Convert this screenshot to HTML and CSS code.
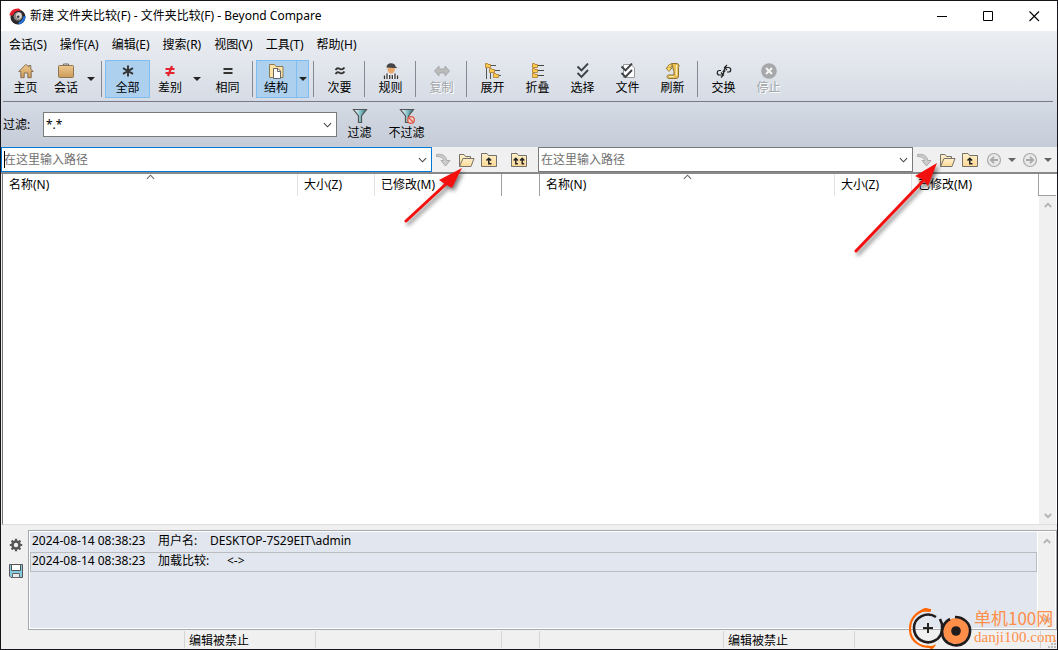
FILE: index.html
```html
<!DOCTYPE html>
<html lang="zh-CN">
<head>
<meta charset="utf-8">
<title>新建 文件夹比较(F) - Beyond Compare</title>
<link rel="stylesheet" href="styles.css">
</head>
<body>
<svg class="defs" aria-hidden="true">
  <defs>
    <linearGradient id="gold" x1="0" y1="0" x2="0" y2="1"><stop offset="0" stop-color="#eec98f"/><stop offset="1" stop-color="#cd9a59"/></linearGradient>
    <linearGradient id="paper" x1="0" y1="0" x2="0" y2="1"><stop offset="0" stop-color="#fff0cb"/><stop offset="1" stop-color="#fbd995"/></linearGradient>
    <linearGradient id="teal" x1="0" y1="0" x2="1" y2="0"><stop offset="0" stop-color="#fff"/><stop offset=".5" stop-color="#8cc5cc"/><stop offset="1" stop-color="#23777f"/></linearGradient>
    <symbol id="chev" viewBox="0 0 10 6"><path d="M1 1l4 4 4-4" fill="none" stroke="currentColor" stroke-width="1.2"/></symbol>
    <symbol id="scrollchev" viewBox="0 0 8 6"><path d="M.8 5L4 1.8 7.200 5" fill="none" stroke="#b5b5b5" stroke-width="2"/></symbol>
    <symbol id="tri" viewBox="0 0 8 4"><path d="M0 0h8L4 4z" fill="currentColor"/></symbol>
    <symbol id="go" viewBox="0 0 17 14"><path d="M1.500 1.500C7 .5 11.500 3 11.500 7.500H15L10.500 13 6 7.500H8.500C8.500 5 5.500 3.500 1.500 3.500z" fill="#ccc" stroke="#aaa"/></symbol>
    <symbol id="open" viewBox="0 0 17 14"><path d="M1.500 13.500V1.500H6L7.500 3.500H12.500V5.500" fill="url(#paper)" stroke="#75706a"/><path d="M1.500 13.500L5 5.500H16L13 13.500z" fill="url(#paper)" stroke="#75706a"/></symbol>
    <symbol id="up" viewBox="0 0 17 14"><path d="M.5 13.500V.5H6L7.500 2.500H15.500V13.500z" fill="url(#paper)" stroke="#75706a"/><path d="M7.800 5v5.700h2.700M5.500 7.500L7.800 5.200l2.300 2.300" fill="none" stroke="#222" stroke-width="1.500"/></symbol>
    <symbol id="upup" viewBox="0 0 17 14"><path d="M.5 13.500V.5H6L7.500 2.500H15.500V13.500z" fill="url(#paper)" stroke="#75706a"/><path d="M4.800 5v5.700h2M2.700 7.500l2.100-2.300 2.100 2.300M11.200 5v5.700h2M9.100 7.500l2.100-2.300 2.100 2.300" fill="none" stroke="#222" stroke-width="1.400"/></symbol>
    <symbol id="back" viewBox="0 0 16 16"><circle cx="8" cy="8" r="6.500" fill="#e8e8e8" stroke="#aaa" stroke-width="1.200"/><path d="M12 8H5M8 4.800L4.800 8 8 11.200" fill="none" stroke="#aaa" stroke-width="1.800"/></symbol>
    <symbol id="forward" viewBox="0 0 16 16"><circle cx="8" cy="8" r="6.500" fill="#e8e8e8" stroke="#aaa" stroke-width="1.200"/><path d="M4 8h7M8 4.800L11.200 8 8 11.200" fill="none" stroke="#aaa" stroke-width="1.800"/></symbol>
    <symbol id="funnel" viewBox="0 0 16 16"><path d="M1.500 1.500h13L9.500 8v6.500h-3V8z" fill="url(#teal)" stroke="#555" stroke-width="1.200"/></symbol>
    <symbol id="flag" viewBox="0 0 6 5"><path d="M.5 4.500v-4h2l.5 1h2.500v3z" fill="#ffc94d" stroke="#a9782b" stroke-width=".8"/></symbol>
  </defs>
</svg>
<div class="window">
  <header class="titlebar">
    <svg class="app-icon" viewBox="0 0 18 18" aria-hidden="true"><circle cx="9.500" cy="9.500" r="8" fill="#2b272b"/><path d="M.5 8C1 3 5 0 10.500.5L13 3C8 2.500 5 4 4 8z" fill="#e8202b"/><path d="M17.500 8.500c.3 4.500-3 8.500-7.500 9l.5-3c2.500-.5 4-2 4.500-5.500z" fill="#2472d8"/><circle cx="9.500" cy="9" r="4.600" fill="#8d8784"/><ellipse cx="10.500" cy="8" rx="3" ry="3.500" fill="#dcd7d1"/><circle cx="9.700" cy="9.300" r="1.400" fill="#443d3e"/></svg>
    <h1 class="title">新建 文件夹比较(F) - 文件夹比较(F) - Beyond Compare</h1>
    <div class="win-controls">
      <button aria-label="最小化"><svg viewBox="0 0 11 11"><path d="M0 5.500h10" stroke="#000"/></svg></button>
      <button aria-label="最大化"><svg viewBox="0 0 11 11"><path d="M.5.5h9v9H.5z" fill="none" stroke="#000"/></svg></button>
      <button aria-label="关闭"><svg viewBox="0 0 11 11"><path d="M.5.5l9.500 9.500M10 .5L.5 10" stroke="#000" stroke-width="1.100"/></svg></button>
    </div>
  </header>

  <div class="chrome">
    <nav class="menubar">
      <button>会话(S)</button><button>操作(A)</button><button>编辑(E)</button><button>搜索(R)</button><button>视图(V)</button><button>工具(T)</button><button>帮助(H)</button>
    </nav>
    <div class="toolbar" role="toolbar">
      <button class="tool"><svg viewBox="0 0 16 16"><path d="M.8 8.500L8 1.300l2.800 2.800V2.500h2v3.600l2.400 2.400h-2v6.200H9.800V10H6.200v4.700H2.800V8.500z" fill="url(#gold)" stroke="#857056"/></svg>主页</button>
      <div class="split">
        <button class="tool tool-narrow"><svg viewBox="0 0 16 16"><path d="M5.500 3V1h5v2" fill="none" stroke="#76695a"/><rect x=".5" y="2.500" width="15" height="12" rx="1" fill="url(#gold)" stroke="#8c7454"/></svg>会话</button>
        <button class="drop" aria-label="会话菜单"><svg><use href="#tri"/></svg></button>
      </div>
      <span class="sep"></span>
      <button class="tool selected"><svg viewBox="0 0 16 16"><path d="M8 2.500v11M3 5.200l10 5.600M13 5.200L3 10.800" stroke="#333" stroke-width="1.900"/></svg>全部</button>
      <div class="split">
        <button class="tool tool-main"><svg viewBox="0 0 16 16"><path d="M3.500 6h9M3.500 10h9M10 3L6 13" stroke="#e5232d" stroke-width="2.200"/></svg>差别</button>
        <button class="drop" aria-label="差别菜单"><svg><use href="#tri"/></svg></button>
      </div>
      <button class="tool"><svg viewBox="0 0 16 16"><path d="M3.500 6h9M3.500 10h9" stroke="#333" stroke-width="2"/></svg>相同</button>
      <span class="sep"></span>
      <div class="split selected">
        <button class="tool tool-main"><svg viewBox="0 0 16 16"><path d="M1.500 14.500v-13h5l1.500 2h7v11z" fill="#ffe3a4" stroke="#8d7a58"/><path d="M5.500 5.500H10l2.500 2.500v7.500h-7z" fill="#fff" stroke="#666"/><path d="M9.500 5.500v3h3" fill="none" stroke="#666"/></svg>结构</button>
        <button class="drop" aria-label="结构菜单"><svg><use href="#tri"/></svg></button>
      </div>
      <span class="sep"></span>
      <button class="tool"><svg viewBox="0 0 16 16"><path d="M3.500 7c2-3 3.500-1.500 4.500-1s2.500 1.200 4.500-1.500M3.500 11c2-3 3.500-1.500 4.500-1s2.500 1.200 4.500-1.500" fill="none" stroke="#333" stroke-width="1.900"/></svg>次要</button>
      <span class="sep"></span>
      <button class="tool"><svg viewBox="0 0 16 16"><path d="M4.500 4.500h7.500c0 4-1.500 6-4 6s-3.500-2.500-3.500-6z" fill="#eba66a"/><path d="M3.500 4.500C3.500-1 12-1 12.500 3.500l2 1.500h-4z" fill="#454545"/><path d="M.5 16c0-4 2-5 4.500-5.500L8 12.500l3-2c2.500.5 4.500 1.500 4.500 5.500z" fill="#f4f4f4"/><path d="M1.500 16v-3.500M4 16v-5.500M6.700 16v-4M9.300 16v-4M12 16v-5.500M14.500 16v-3.500" stroke="#333" stroke-width="1.300"/></svg>规则</button>
      <span class="sep"></span>
      <button class="tool" disabled><svg viewBox="0 0 16 16"><path d="M.5 8L5 3v3h6V3l4.500 5L11 13v-3H5v3z" fill="#bbb" stroke="#a7a9ac"/></svg>复制</button>
      <span class="sep"></span>
      <button class="tool"><svg viewBox="0 0 16 16"><path d="M1.500 5v11M5.500 10v6M6 2.500h5M10 7.500h5M14 12.500h2" stroke="#555" fill="none"/><use href="#flag" x="0" y="0" width="6" height="5"/><use href="#flag" x="4" y="5" width="6" height="5"/><use href="#flag" x="8" y="10" width="6" height="5"/></svg>展开</button>
      <button class="tool"><svg viewBox="0 0 16 16"><path d="M8 2.500h6M8 7.500h6M8 12.500h6" stroke="#444"/><use href="#flag" x="2" y="0" width="6" height="5"/><use href="#flag" x="2" y="5" width="6" height="5"/><use href="#flag" x="2" y="10" width="6" height="5"/></svg>折叠</button>
      <button class="tool"><svg viewBox="0 0 16 16"><path d="M2.500 3.500l4 4 6.500-7M2.500 10l4 4L13 7" fill="none" stroke="#3e4247" stroke-width="1.900"/></svg>选择</button>
      <button class="tool"><svg viewBox="0 0 16 16"><path d="M3.500 1.500H11l3.500 3.500v9.500h-11z" fill="#fff" stroke="#999"/><path d="M1.500 3.500l4 4 6.500-7M1.500 10l4 4L12 7" fill="none" stroke="#3e4247" stroke-width="1.900"/></svg>文件</button>
      <button class="tool"><svg viewBox="0 0 16 16"><path d="M6.500.5H12c2 .5 2.500 2.500 1.500 4v8.500c0 1.500-1 2.500-2.500 2.500H4c-2.500 0-2.500-3.500 0-3.500h5V8.500z" fill="#e9bd55" stroke="#8f7131"/><path d="M11.500 2v10.500" stroke="#fff0b3" stroke-width="1.300"/><path d="M7 1v2.500c-1.500 0-2 .5-2 1.500h2L4 8.500 1 5h1.500C2.500 2.500 4 1 7 1z" fill="#ffd65c" stroke="#8f7131" stroke-width=".8"/><path d="M4 13.500h5" stroke="#fff0b3"/></svg>刷新</button>
      <span class="sep"></span>
      <button class="tool"><svg viewBox="0 0 16 16"><path d="M5 7.500H3.500c-3 0-3 4.500 0 4.500H7M5 9.500L7.500 12 5 14.500M11 9h1.500c3 0 3-4.500 0-4.500H9M11 2L8.500 4.500 11 7M6.500 8.500c2 0 2-1.500 2-3M9.500 8c-2 0-2 1.500-2 3" fill="none" stroke="#222" stroke-width="1.200"/></svg>交换</button>
      <button class="tool" disabled><svg viewBox="0 0 16 16"><circle cx="8" cy="8" r="7.800" fill="#a5a7a9"/><path d="M5 5l6 6M11 5l-6 6" stroke="#f2f2f2" stroke-width="2.200"/></svg>停止</button>
    </div>
    <div class="filterbar">
      <label for="filter">过滤:</label>
      <div class="combo filter-combo"><input id="filter" value="*.*"><button aria-label="过滤列表"><svg><use href="#chev"/></svg></button></div>
      <button class="tool"><svg><use href="#funnel"/></svg>过滤</button>
      <button class="tool tool-wide"><svg viewBox="0 0 16 16"><use href="#funnel" width="16" height="16"/><circle cx="12" cy="12" r="3.300" fill="#f5d4cf" stroke="#d95b49" stroke-width="1.300"/><path d="M9.800 9.800l4.400 4.400" stroke="#d95b49" stroke-width="1.300"/></svg>不过滤</button>
    </div>
  </div>

  <div class="columns pathbar">
    <div class="path path-left">
      <div class="combo focused"><span class="cursor"></span><input aria-label="左侧路径" placeholder="在这里输入路径"><button aria-label="左侧历史"><svg><use href="#chev"/></svg></button></div>
      <button class="icon" disabled aria-label="转到"><svg><use href="#go"/></svg></button>
      <button class="icon" aria-label="浏览文件夹"><svg><use href="#open"/></svg></button>
      <button class="icon" aria-label="上一级"><svg><use href="#up"/></svg></button>
      <button class="icon both" aria-label="两侧上一级"><svg><use href="#upup"/></svg></button>
    </div>
    <div class="path path-right">
      <div class="combo"><input aria-label="右侧路径" placeholder="在这里输入路径"><button aria-label="右侧历史"><svg><use href="#chev"/></svg></button></div>
      <button class="icon" disabled aria-label="转到"><svg><use href="#go"/></svg></button>
      <button class="icon" aria-label="浏览文件夹"><svg><use href="#open"/></svg></button>
      <button class="icon" aria-label="上一级"><svg><use href="#up"/></svg></button>
      <button class="icon round" disabled aria-label="后退"><svg><use href="#back"/></svg></button>
      <button class="drop" aria-label="后退历史"><svg><use href="#tri"/></svg></button>
      <button class="icon round" disabled aria-label="前进"><svg><use href="#forward"/></svg></button>
      <button class="drop" aria-label="前进历史"><svg><use href="#tri"/></svg></button>
    </div>
  </div>

  <main class="columns files">
    <table class="list"><thead><tr><th class="name">名称(N)<svg class="sort"><use href="#chev"/></svg></th><th class="size">大小(Z)</th><th class="date">已修改(M)</th></tr></thead></table>
    <div class="gutter"></div>
    <table class="list"><thead><tr><th class="name">名称(N)<svg class="sort"><use href="#chev"/></svg></th><th class="size">大小(Z)</th><th class="date">已修改(M)</th></tr></thead></table>
    <div class="scroll-side">
      <div class="corner"></div>
      <div class="scrollbar"><button aria-label="向上滚动"><svg><use href="#scrollchev"/></svg></button><button aria-label="向下滚动"><svg class="flip"><use href="#scrollchev"/></svg></button></div>
    </div>
  </main>

  <section class="log">
    <div class="log-tools">
      <button aria-label="设置"><svg viewBox="0 0 14 14"><circle cx="7" cy="7" r="3.500" fill="none" stroke="#555" stroke-width="2.600"/><path d="M7 .8v2M7 11.200v2M.8 7h2M11.200 7h2M2.600 2.600L4 4M10 10l1.400 1.400M11.400 2.600L10 4M4 10l-1.400 1.400" stroke="#555" stroke-width="2.200"/></svg></button>
      <button aria-label="保存"><svg viewBox="0 0 14 14"><path d="M.5.5h13v13H2L.5 12z" fill="#83cbe2" stroke="#555"/><path d="M2.500.5h9v6h-9z" fill="#fff" stroke="#555"/><path d="M3.500 9.500h7v4h-7z" fill="#e6ebe9" stroke="#666"/></svg></button>
    </div>
    <div class="log-frame">
      <ul class="log-list">
        <li><span class="time">2024-08-14 08:38:23</span><span class="kind">用户名:</span><span>DESKTOP-7S29EIT\admin</span></li>
        <li class="current"><span class="time">2024-08-14 08:38:23</span><span class="kind kind-long">加载比较:</span><span>&lt;-&gt;</span></li>
      </ul>
      <div class="scrollbar"><button aria-label="日志向上滚动"><svg><use href="#scrollchev"/></svg></button><button aria-label="日志向下滚动"><svg class="flip"><use href="#scrollchev"/></svg></button></div>
    </div>
  </section>

  <footer class="columns statusbar">
    <div class="status-side"><span class="blank"></span><span class="state">编辑被禁止</span></div>
    <div class="gutter"></div>
    <div class="status-side"><span class="blank"></span><span class="state">编辑被禁止</span></div>
    <svg class="grip" viewBox="0 0 9 9"><path d="M6 0h2v2H6zM3 3h2v2H3zM6 3h2v2H6zM0 6h2v2H0zM3 6h2v2H3zM6 6h2v2H6z" fill="#bbb"/></svg>
  </footer>

  <svg class="pointer pointer-left" viewBox="0 0 70 65" aria-hidden="true"><path d="M6 58L46 21" stroke="#f51010" stroke-width="3" stroke-linecap="round"/><path d="M62 5L39 17l6 4 7 4z" fill="#f51010"/></svg>
  <svg class="pointer pointer-right" viewBox="0 0 95 100" aria-hidden="true"><path d="M6 92L73 22" stroke="#f51010" stroke-width="3" stroke-linecap="round"/><path d="M87 4L65 17l8 4 5 6z" fill="#f51010"/></svg>

  <div class="watermark">
    <svg viewBox="0 0 64 42" aria-hidden="true">
      <path d="M22 3C9 2 1 11 1 22c0 11 9 19 23 18" fill="none" stroke="#f60" stroke-width="2.200"/><path d="M10 5c4-4 8-6 12-1l-1 1-6-.5zM17 38c4 2 7 1 10-1-1 3-3 5-5 5z" fill="#f60"/>
      <path d="M27 10C18 4 5 10 5 21s11 17 20 13c7-3 9-9 8-17l-2-5" fill="none" stroke="#201b1c" stroke-width="2.600"/><path d="M19 16v10M14 21h10" stroke="#222" stroke-width="2"/>
      <circle cx="47" cy="24" r="13" fill="#ff8e49"/><path d="M46 10c8 0 16 6 15 15-1 9-8 15-17 13-8-2-11-8-11-14 1-6 4-10 8-12" fill="none" stroke="#201b1c" stroke-width="2.600"/><circle cx="47" cy="24" r="4.800" fill="#201b1c"/>
    </svg>
    <div class="brand"><span class="brand-name">单机100网</span><span class="brand-url">danji100.com</span></div>
  </div>
</div>
</body>
</html>
```
FILE: styles.css
```css
* { box-sizing: border-box; }
body {
  margin: 0;
  font: 12px/16px "Noto Sans", "Noto Sans CJK SC", sans-serif;
  color: #000;
}
button, input { font: inherit; color: inherit; border: 0; padding: 0; margin: 0; background: none; }
svg { display: block; flex: none; }
.defs { position: absolute; width: 0; height: 0; }

.window {
  position: relative;
  display: flex;
  flex-direction: column;
  min-height: 100vh;
  border: 1px solid #16161a;
  background: #f0f0f0;
  overflow: hidden;
}

/* Title bar */
.titlebar { display: flex; align-items: center; height: 30px; padding-left: 8px; background: #fff; }
.app-icon { width: 17px; height: 17px; }
.title { flex: 1; margin: 0 0 0 4px; font-size: 12px; font-weight: 400; white-space: nowrap; }
.win-controls { display: flex; }
.win-controls button { width: 46px; height: 30px; display: grid; place-items: center; }
.win-controls svg { width: 11px; height: 11px; }

/* Menus, toolbar and filter share one gradient */
.chrome { background: linear-gradient(#ebeef2, #dce1e9 45%, #c5ccd8); }
.menubar { display: flex; gap: 13px; height: 28px; padding: 0 8px; align-items: center; white-space: nowrap; }
.toolbar {
  display: flex;
  height: 43px;
  margin: 0 4px 0 2px;
  padding-top: 1px;
  border-bottom: 1px solid #777b88;
}
.tool {
  display: flex;
  flex-direction: column;
  align-items: center;
  gap: 1px;
  width: 45px;
  height: 38px;
  padding-top: 3px;
  white-space: nowrap;
}
.tool svg { width: 16px; height: 16px; }
.tool-main { width: 40px; }
.tool-narrow { width: 36px; }
.tool:disabled { color: #a2a4a8; text-shadow: 1px 1px #fff; }
.tool.selected, .split.selected { background: #aed0ef; box-shadow: inset 0 0 0 1px #7fbcf0; }
.split { display: flex; height: 38px; margin-right: 2px; }
.split.selected .drop { border-left: 1px solid #7fbcf0; }
.drop { display: grid; place-items: center; width: 13px; color: #222; }
.drop svg { width: 8px; height: 4px; }
.sep { width: 1px; height: 36px; margin: 1px 3px 0 2px; background: #858994; }

.filterbar { display: flex; align-items: center; height: 45px; padding-left: 2px; }
.filterbar label { width: 40px; white-space: nowrap; }
.filterbar .tool { height: 40px; }
.filterbar .tool-wide { width: 49px; }
.combo {
  position: relative;
  display: flex;
  flex: 1;
  min-width: 0;
  height: 25px;
  background: #fff;
  border: 1px solid #7a7a7a;
}
.combo input { flex: 1; min-width: 0; padding: 0 2px; outline: 0; }
.combo input::placeholder { color: #707070; opacity: 1; }
.combo button { display: grid; place-items: center; width: 17px; color: #444; }
.combo button svg { width: 9px; height: 6px; }
.combo.focused { border-color: #0078d7; }
.filter-combo { flex: 0 1 294px; }
.cursor { position: absolute; left: 2px; top: 3px; width: 1px; height: 17px; background: #000; }

/* Both panes, their gutter and the scroll bar */
.columns { display: grid; grid-template-columns: minmax(0, 1fr) 38px minmax(0, 1fr) 16px; }
.pathbar { grid-template-columns: minmax(0, 1fr) 38px minmax(0, 1fr) 20px; border-bottom: 2px solid #898989; }
.path { grid-column: span 2; display: flex; align-items: center; min-width: 0; }
.path-right { padding-right: 3px; }
.icon { display: grid; place-items: center; width: 23px; height: 24px; }
.icon svg { width: 17px; height: 14px; }
.round svg { width: 16px; height: 16px; }
.both { margin: 0 7px; }
.path .drop { color: #666; }

.files {
  grid-template-columns: minmax(0, 1fr) 38px minmax(0, 1fr) 17px;
  flex: 1;
  margin-left: 1px;
  padding-right: 1px;
  background: #fff;
  border-left: 1px solid #777;
  border-bottom: 1px solid #ddd;
}
.list { width: 100%; table-layout: fixed; border-collapse: separate; border-spacing: 0; align-self: start; }
.list th { position: relative; height: 22px; padding: 0 6px; text-align: left; font-weight: 400; border-right: 1px solid #e3e3e3; white-space: nowrap; }
.list .size { width: 77px; }
.list .date { width: 127px; border-right-color: #a0a0a0; }
.files .gutter { height: 22px; border-right: 1px solid #a0a0a0; }
.sort { position: absolute; top: 0; left: 50%; width: 9px; height: 6px; margin-left: -4px; transform: rotate(180deg); color: #666; }
.scroll-side { display: flex; flex-direction: column; }
.corner { height: 22px; border-bottom: 1px solid #a0a0a0; }
.scrollbar { flex: 1; display: flex; flex-direction: column; justify-content: space-between; width: 17px; background: #f0f0f0; }
.scrollbar button { display: grid; place-items: center; height: 17px; }
.scrollbar svg { width: 8px; height: 6px; }
.flip { transform: rotate(180deg); }

/* Log */
.log { display: flex; height: 105px; padding-top: 5px; }
.log-tools { display: flex; flex-direction: column; gap: 12px; width: 27px; padding: 8px 0 0 8px; }
.log-tools svg { width: 14px; height: 14px; }
.log-frame { flex: 1; display: flex; padding: 1px; background: #fff; border: 1px solid #a5a8ad; }
.log-frame .scrollbar { flex: none; margin-left: 1px; }
.log-list { flex: 1; margin: 0; padding: 0; list-style: none; background: #e2e6ee; }
.log-list li { display: flex; height: 20px; padding: 0 1px; border: 1px solid transparent; }
.log-list .current { border-color: #babcc0; }
.time { width: 126px; }
.kind { width: 52px; white-space: nowrap; }
.kind-long { width: 69px; }

/* Status bar */
.statusbar { height: 19px; align-items: center; line-height: 20px; }
.status-side { display: flex; height: 17px; border-right: 1px solid #d5d5d5; }
.status-side .blank { width: 184px; border-right: 1px solid #d5d5d5; }
.status-side .state { width: 131px; padding-left: 4px; border-right: 1px solid #d5d5d5; }
.statusbar .gutter { height: 17px; border-right: 1px solid #d5d5d5; }
.grip { width: 9px; height: 9px; align-self: end; justify-self: end; }

/* Annotations over the panes */
.pointer { position: absolute; filter: drop-shadow(2px 3px 2px #0008); pointer-events: none; }
.pointer-left { left: 399px; top: 162px; width: 70px; height: 65px; }
.pointer-right { left: 849px; top: 158px; width: 95px; height: 100px; }
.watermark { position: absolute; right: 1px; bottom: 0; display: flex; gap: 1px; color: #ff8e49; }
.watermark svg { width: 64px; height: 42px; }
.brand { display: flex; flex-direction: column; width: 82px; white-space: nowrap; }
.brand-name { font: 17px/22px "Noto Sans CJK SC", sans-serif; }
.brand-url { font: 15px/17px "Liberation Serif", serif; }
```
